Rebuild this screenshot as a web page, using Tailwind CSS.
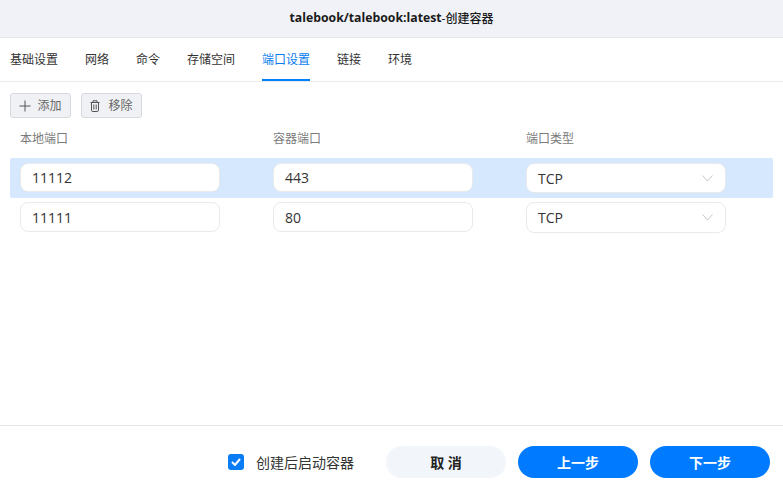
<!DOCTYPE html>
<html lang="zh">
<head>
<meta charset="utf-8">
<script src="https://cdn.jsdelivr.net/npm/@tailwindcss/browser@4"></script>
</head>
<body class="bg-white">
<div class="w-[783px] h-[488px] flex flex-col overflow-hidden bg-white text-[12px] text-[#333] font-['Open_Sans','Noto_Sans_CJK_SC',sans-serif]">
  <header class="h-[38px] shrink-0 flex items-center justify-center bg-[#f0f2f7] border-b border-[#e3e5e8] text-[12px] text-[#1a1a1a]"><span class="font-bold text-[12.25px]">talebook/talebook:latest</span><span class="font-medium">-创建容器</span></header>
  <nav class="h-[44px] shrink-0 flex gap-[27px] pl-[10px] border-b border-[#e8eaec]">
    <a class="flex items-center h-full text-[#333]">基础设置</a>
    <a class="flex items-center h-full text-[#333]">网络</a>
    <a class="flex items-center h-full text-[#333]">命令</a>
    <a class="flex items-center h-full text-[#333]">存储空间</a>
    <a class="flex items-center h-full text-[#0a7cf0] border-b-2 border-[#007fff] box-border pt-[2px] -mb-px">端口设置</a>
    <a class="flex items-center h-full text-[#333]">链接</a>
    <a class="flex items-center h-full text-[#333]">环境</a>
  </nav>
  <main class="flex-1 flex flex-col px-[10px] pt-[11px]">
    <div class="flex gap-[10px]">
      <button class="w-[61px] h-[25px] flex items-center justify-center gap-[6px] bg-[#f0f1f4] border border-[#d8dadf] rounded-[3px] text-[#666]">
        <svg class="w-[12px] h-[12px]" viewBox="0 0 12 12" fill="none" stroke="#555" stroke-width="1"><path d="M6 .5v11M.5 6h11"/></svg>
        <span>添加</span>
      </button>
      <button class="w-[61px] h-[25px] flex items-center justify-center gap-[8px] bg-[#f0f1f4] border border-[#d8dadf] rounded-[3px] text-[#666]">
        <svg class="w-[10px] h-[12px]" viewBox="0 0 10 12" fill="none" stroke="#555" stroke-width="1"><path d="M.5 2.5h9M3 2.5V.8h4v1.7M1.5 2.5v7.7a1.3 1.3 0 0 0 1.3 1.3h4.4a1.3 1.3 0 0 0 1.3-1.3V2.5M3.8 4.5v5M6.2 4.5v5"/></svg>
        <span>移除</span>
      </button>
    </div>
    <div class="grid grid-cols-[253px_253px_254px] h-[18px] mt-[12px] px-[10px] items-center text-[#7a7a7a]">
      <span>本地端口</span><span>容器端口</span><span>端口类型</span>
    </div>
    <div class="grid grid-cols-[253px_253px_244px] h-[40px] mt-[10px] pt-[5px] px-[10px] items-start bg-[#d6e8fd] rounded-[2px]">
      <div class="w-[200px] h-[29px] flex items-center pl-[11px] bg-white border border-[#e8eaec] rounded-[8px] text-[14px] text-[#333]">11112</div>
      <div class="w-[200px] h-[29px] flex items-center pl-[11px] bg-white border border-[#e8eaec] rounded-[8px] text-[14px] text-[#333]">443</div>
      <div class="w-[200px] h-[30px] flex items-center justify-between pl-[11px] pr-[12px] bg-white border border-[#e8eaec] rounded-[8px] text-[14px] text-[#333]">
        <span>TCP</span>
        <svg class="w-[11px] h-[7px]" viewBox="0 0 11 7" fill="none" stroke="#c4c6ca" stroke-width="1"><path d="M.5 .5l5 5.5 5-5.5"/></svg>
      </div>
    </div>
    <div class="grid grid-cols-[253px_253px_244px] mt-[4px] px-[10px] items-start">
      <div class="w-[200px] h-[30px] flex items-center pl-[11px] bg-white border border-[#e8eaec] rounded-[8px] text-[14px] text-[#333]">11111</div>
      <div class="w-[200px] h-[30px] flex items-center pl-[11px] bg-white border border-[#e8eaec] rounded-[8px] text-[14px] text-[#333]">80</div>
      <div class="w-[200px] h-[31px] flex items-center justify-between pl-[11px] pr-[12px] bg-white border border-[#e8eaec] rounded-[8px] text-[14px] text-[#333]">
        <span>TCP</span>
        <svg class="w-[11px] h-[7px]" viewBox="0 0 11 7" fill="none" stroke="#c4c6ca" stroke-width="1"><path d="M.5 .5l5 5.5 5-5.5"/></svg>
      </div>
    </div>
  </main>
  <footer class="h-[63px] shrink-0 flex items-start justify-end gap-[12px] pt-[20px] pr-[13px] border-t border-[#e6e8ea]">
    <div class="h-[32px] flex items-center gap-[12px] mr-[20px]">
      <span class="w-[16px] h-[16px] flex items-center justify-center bg-[#0a7cf5] rounded-[3px]">
        <svg class="w-[10px] h-[8px]" viewBox="0 0 10 8" fill="none" stroke="#fff" stroke-width="2"><path d="M1 4l3 3 5-6"/></svg>
      </span>
      <span class="text-[14px] text-[#333]">创建后启动容器</span>
    </div>
    <button class="w-[120px] h-[32px] rounded-full bg-[#f2f6fa] text-[14px] text-[#222] font-bold">取 消</button>
    <button class="w-[120px] h-[32px] rounded-full bg-[#007bff] text-[14px] text-white font-bold">上一步</button>
    <button class="w-[120px] h-[32px] rounded-full bg-[#007bff] text-[14px] text-white font-bold">下一步</button>
  </footer>
</div>
</body>
</html>
